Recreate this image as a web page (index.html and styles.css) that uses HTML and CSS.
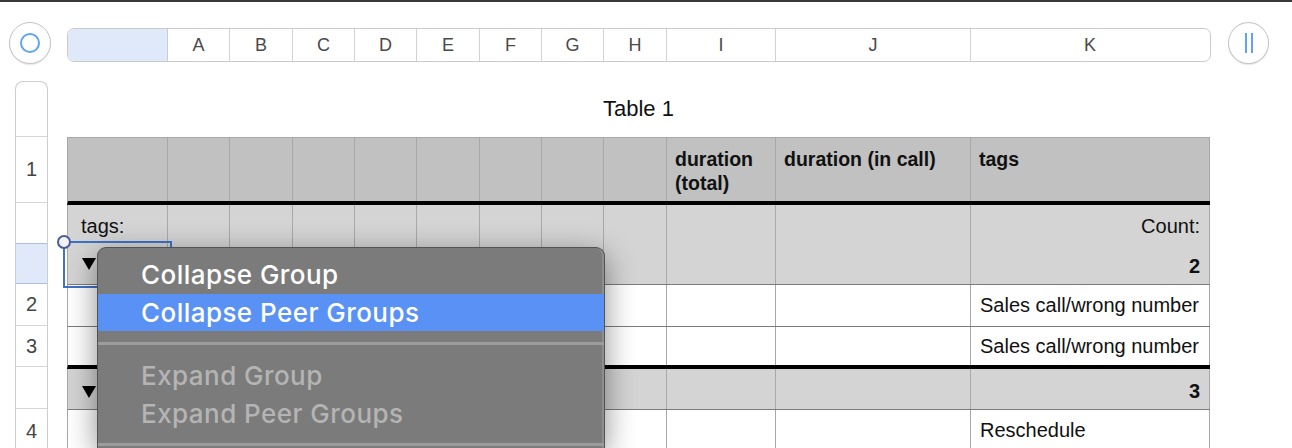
FILE: index.html
```html
<!DOCTYPE html>
<html>
<head>
<meta charset="utf-8">
<link rel="stylesheet" href="styles.css">
</head>
<body>
<div class="topline"></div>
<div class="toolbar">
  <div class="round-btn left-btn">
    <svg width="22" height="22" viewBox="0 0 22 22"><circle cx="11" cy="11" r="9" fill="none" stroke="#5fa2f6" stroke-width="2"/></svg>
  </div>
  <div class="colbar">
    <div class="ch sel"></div>
    <div class="ch">A</div>
    <div class="ch">B</div>
    <div class="ch">C</div>
    <div class="ch">D</div>
    <div class="ch">E</div>
    <div class="ch">F</div>
    <div class="ch">G</div>
    <div class="ch">H</div>
    <div class="ch">I</div>
    <div class="ch">J</div>
    <div class="ch last">K</div>
  </div>
  <div class="round-btn right-btn">
    <svg width="12" height="24" viewBox="0 0 12 24"><rect x="2" y="2" width="2" height="20" fill="#5fa2f6"/><rect x="8" y="2" width="2" height="20" fill="#5fa2f6"/></svg>
  </div>
</div>

<div class="sheet">
  <div class="rowheads">
    <div class="rh rh-top"></div>
    <div class="rh rh-1">1</div>
    <div class="rh rh-b1"></div>
    <div class="rh rh-sel"></div>
    <div class="rh rh-2">2</div>
    <div class="rh rh-3">3</div>
    <div class="rh rh-b2"></div>
    <div class="rh rh-4">4</div>
  </div>

  <div class="tablearea">
    <div class="title">Table 1</div>
    <div class="tbl">
      <div class="row hdr">
        <div class="c"></div><div class="c"></div><div class="c"></div><div class="c"></div><div class="c"></div><div class="c"></div><div class="c"></div><div class="c"></div><div class="c"></div>
        <div class="c">duration (total)</div>
        <div class="c">duration (in call)</div>
        <div class="c">tags</div>
      </div>
      <div class="row label">
        <div class="c first">tags:</div>
        <div class="c"></div><div class="c"></div><div class="c"></div><div class="c"></div><div class="c"></div><div class="c"></div><div class="c"></div><div class="c"></div>
        <div class="c"></div><div class="c"></div>
        <div class="c right">Count:</div>
      </div>
      <div class="row sum sum1">
        <div class="c first"><svg class="tri" width="14" height="12" viewBox="0 0 14 12"><polygon points="0,0 14,0 7,12" fill="#000"/></svg></div>
        <div class="c"></div><div class="c"></div><div class="c"></div><div class="c"></div><div class="c"></div><div class="c"></div><div class="c"></div><div class="c"></div>
        <div class="c"></div><div class="c"></div>
        <div class="c right bold">2</div>
      </div>
      <div class="row data r2">
        <div class="c"></div><div class="c"></div><div class="c"></div><div class="c"></div><div class="c"></div><div class="c"></div><div class="c"></div><div class="c"></div><div class="c"></div>
        <div class="c"></div><div class="c"></div>
        <div class="c">Sales call/wrong number</div>
      </div>
      <div class="row data r3">
        <div class="c"></div><div class="c"></div><div class="c"></div><div class="c"></div><div class="c"></div><div class="c"></div><div class="c"></div><div class="c"></div><div class="c"></div>
        <div class="c"></div><div class="c"></div>
        <div class="c">Sales call/wrong number</div>
      </div>
      <div class="row sum sum2">
        <div class="c first"><svg class="tri" width="14" height="12" viewBox="0 0 14 12"><polygon points="0,0 14,0 7,12" fill="#000"/></svg></div>
        <div class="c"></div><div class="c"></div><div class="c"></div><div class="c"></div><div class="c"></div><div class="c"></div><div class="c"></div><div class="c"></div>
        <div class="c"></div><div class="c"></div>
        <div class="c right bold">3</div>
      </div>
      <div class="row data r4">
        <div class="c"></div><div class="c"></div><div class="c"></div><div class="c"></div><div class="c"></div><div class="c"></div><div class="c"></div><div class="c"></div><div class="c"></div>
        <div class="c"></div><div class="c"></div>
        <div class="c">Reschedule</div>
      </div>
    </div>
  </div>
</div>

<div class="selection"><span class="handle"></span></div>

<div class="menu">
  <div class="mi first-item">Collapse Group</div>
  <div class="mi hl">Collapse Peer Groups</div>
  <div class="sep"></div>
  <div class="mi dis">Expand Group</div>
  <div class="mi dis">Expand Peer Groups</div>
  <div class="sep"></div>
</div>
</body>
</html>
```

FILE: styles.css
```css
* { box-sizing: border-box; }
html, body {
  margin: 0;
  padding: 0;
  width: 1292px;
  height: 448px;
  overflow: hidden;
  background: #fff;
  font-family: "Liberation Sans", Arial, sans-serif;
}
body { position: relative; }

.topline { height: 2px; background: #3a3a3a; }

.toolbar {
  display: flex;
  align-items: flex-start;
  margin-top: 20px;
  padding-left: 9px;
  height: 42px;
}
.round-btn {
  flex: none;
  width: 42px;
  height: 42px;
  border-radius: 50%;
  border: 1px solid #c4c4c4;
  background: #fff;
  box-shadow: 0 1px 1px rgba(0,0,0,0.10);
  display: flex;
  align-items: center;
  justify-content: center;
}
.round-btn svg { display: block; }
.right-btn { width: 41px; margin-left: 17px; }

.colbar {
  flex: none;
  margin-left: 16px;
  margin-top: 6px;
  width: 1144px;
  height: 34px;
  border: 1px solid #cacaca;
  border-radius: 7px;
  overflow: hidden;
  display: grid;
  grid-template-columns: 100px 62px 63px 62px 62px 63px 62px 62px 63px 109px 195px 238px;
}
.ch {
  border-right: 1px solid #d2d2d2;
  display: flex;
  align-items: center;
  justify-content: center;
  font-size: 18px;
  color: #4a4a4a;
  padding-top: 1px;
}
.ch.sel { background: #dfe9fa; border-right-color: #c2cde0; }
.ch.last { border-right: none; }

.sheet {
  display: flex;
  margin-top: 17px;
  padding-left: 15px;
}
.rowheads {
  flex: none;
  width: 33px;
  border: 1px solid #cdcdcd;
  border-bottom: none;
  border-radius: 8px 8px 0 0;
  height: 367px;
  overflow: hidden;
}
.rh {
  border-bottom: 1px solid #d6d6d6;
  display: flex;
  align-items: center;
  justify-content: center;
  font-size: 20px;
  color: #454545;
}
.rh-top { height: 55px; }
.rh-1 { height: 66px; }
.rh-b1 { height: 41px; }
.rh-sel { background: #dfe9fa; border-top: 1px solid #a9bfe3; border-bottom: 1px solid #a9bfe3; margin-top: -1px; height: 41px; }
.rh-2 { height: 42px; }
.rh-3 { height: 41px; }
.rh-b2 { height: 42px; }
.rh-4 { height: 40px; border-bottom: none; padding-top: 4px; }

.tablearea {
  flex: none;
  margin-left: 19px;
  width: 1143px;
}
.title {
  height: 56px;
  display: flex;
  align-items: center;
  justify-content: center;
  font-size: 22px;
  color: #111;
}

.row {
  display: grid;
  grid-template-columns: 100px 62px 63px 62px 62px 63px 62px 62px 63px 109px 195px 239px;
  border-left: 1px solid #a8a8a8;
}
.c {
  border-right: 1px solid #a8a8a8;
  font-size: 20px;
  color: #111;
  padding: 0 9px;
  display: flex;
  align-items: center;
  white-space: nowrap;
}
.c.right { justify-content: flex-end; }
.c.bold { font-weight: bold; }
.c.first { padding-left: 13px; }

.hdr {
  height: 68px;
  background: #c0c1c0;
  border-top: 1px solid #a8a8a8;
  border-bottom: 4px solid #000;
}
.hdr .c {
  align-items: flex-start;
  padding-top: 9px;
  padding-left: 8px;
  font-weight: bold;
  font-size: 19.5px;
  line-height: 24px;
  white-space: normal;
}
.label {
  height: 39px;
  background: #d4d4d4;
}
.label .c { padding-top: 4px; }
.sum {
  height: 41px;
  background: #d4d4d4;
  border-bottom: 1px solid #7c7c7c;
}
.sum .c { padding-top: 4px; }
.sum .c.first { padding-left: 14px; padding-top: 0; }
.tri { display: block; }
.data { background: #fff; }
.r2 { height: 42px; border-bottom: 1px solid #7c7c7c; }
.r3 { height: 42px; border-bottom: 4px solid #000; }
.r4 { height: 38px; }
.r4 .c { padding-top: 9px; align-items: flex-start; }
.sum2 .c.first { padding-left: 14px; padding-top: 5px; }

.selection {
  position: absolute;
  left: 63px;
  top: 241px;
  width: 109px;
  height: 47px;
  border: 2px solid #3f72c8;
}
.handle {
  position: absolute;
  left: -8px;
  top: -8px;
  width: 14px;
  height: 14px;
  border-radius: 50%;
  background: #f2f2f6;
  border: 2px solid #4b5d98;
}

.menu {
  position: absolute;
  left: 97px;
  top: 247px;
  width: 508px;
  height: 201px;
  overflow: hidden;
  background: #7b7b7b;
  border: 1px solid #535353;
  border-bottom: none;
  border-radius: 9px 9px 0 0;
  padding-top: 7px;
  box-shadow: inset -2px 0 0 #8e8e8e, 0 8px 30px rgba(0,0,0,0.45);
  font-family: "Inter", "Liberation Sans", sans-serif;
  font-size: 26px;
  font-weight: 500;
  letter-spacing: 0.45px;
  color: #fff;
}
.mi {
  height: 38px;
  display: flex;
  align-items: center;
  padding-left: 43px;
}
.mi.first-item { height: 39px; }
.mi.hl { height: 37px; background: #5a91f4; }
.mi.dis { color: #b4b4b4; }
.sep {
  height: 3px;
  background: #9c9c9c;
  margin: 11px 0;
}
```
